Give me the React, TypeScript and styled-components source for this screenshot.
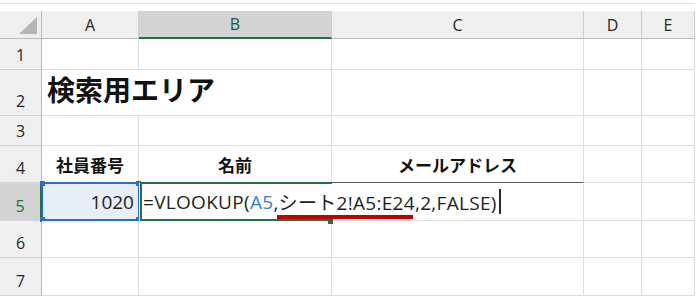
import React from "react";
import styled, { createGlobalStyle } from "styled-components";

const GRID = "#dcdcdc";
const HEAD_BG = "#efefef";
const HEAD_SEL = "#d3d3d3";
const GREEN = "#217346";
const BLUE = "#2a6fcb";
const FONT = `"Open Sans", "Noto Sans CJK JP", sans-serif`;

const Global = createGlobalStyle`
  *, *::before, *::after { box-sizing: border-box; }
  html, body { margin: 0; padding: 0; background: #fff; }
  body { font-family: ${FONT}; color: #1b1b1b; }
`;

const Sheet = styled.div`
  display: grid;
  width: 695px;
  grid-template-columns: 42px 97px 193px 252px 58px 53px;
  grid-template-rows: 11px 28px 31px 46px 30px 37px 38px 37px 38px;
  background: #fff;
`;

const TopStrip = styled.div`
  grid-column: 1 / -1;
  padding-top: 3px;
  &::after {
    content: "";
    display: block;
    height: 1px;
    background: #e2e2e2;
  }
`;

const Corner = styled.div`
  display: flex;
  align-items: flex-end;
  justify-content: flex-end;
  padding: 0 4px 4px 0;
  background: ${HEAD_BG};
  border-right: 1px solid #b9b9b9;
  border-bottom: 1px solid #b9b9b9;
`;

const ColHeader = styled.div<{ $selected?: boolean }>`
  display: flex;
  align-items: center;
  justify-content: center;
  font-size: 16px;
  color: ${(p) => (p.$selected ? "#1f5a38" : "#262626")};
  background: ${(p) => (p.$selected ? HEAD_SEL : HEAD_BG)};
  border-right: 1px solid #cdcdcd;
  border-bottom: ${(p) => (p.$selected ? `2px solid ${GREEN}` : "1px solid #b9b9b9")};
`;

const RowHeader = styled.div<{ $selected?: boolean }>`
  display: flex;
  align-items: flex-end;
  justify-content: center;
  padding-bottom: 4px;
  font-size: 16px;
  line-height: 20px;
  color: ${(p) => (p.$selected ? GREEN : "#262626")};
  background: ${(p) => (p.$selected ? HEAD_SEL : HEAD_BG)};
  border-right: ${(p) => (p.$selected ? `2px solid ${GREEN}` : "1px solid #b9b9b9")};
  border-bottom: 1px solid #d4d4d4;
`;

const Cell = styled.div<{
  $noRight?: boolean;
  $darkBottom?: boolean;
  $justify?: string;
  $bg?: string;
}>`
  position: relative;
  display: flex;
  align-items: center;
  justify-content: ${(p) => p.$justify || "flex-start"};
  min-width: 0;
  background: ${(p) => p.$bg || "#fff"};
  border-right: 1px solid ${(p) => (p.$noRight ? "transparent" : GRID)};
  border-bottom: 1px solid ${(p) => (p.$darkBottom ? "#5a5a5a" : GRID)};
`;

const TitleCell = styled(Cell)`
  align-items: flex-end;
  padding: 0 0 9px 5px;
  z-index: 1;
`;

const Title = styled.span`
  white-space: nowrap;
  font-size: 28px;
  font-weight: 700;
  line-height: 32px;
  color: #111;
`;

const Label = styled.span`
  font-size: 17px;
  font-weight: 700;
  color: #111;
  white-space: nowrap;
`;

const NumberCell = styled(Cell)`
  padding-right: 4px;
  font-size: 19px;
  color: #222;
`;

const RefFrame = styled.div`
  position: absolute;
  top: -1px;
  bottom: -1px;
  left: 0;
  right: -1px;
  border-top: 2px solid ${BLUE};
  border-bottom: 2px solid ${BLUE};
  border-left: 1px solid ${BLUE};
  border-right: 1px solid ${BLUE};
  pointer-events: none;
`;

const Handle = styled.div<{ $x: "left" | "right"; $y: "top" | "bottom" }>`
  position: absolute;
  width: 5px;
  height: 5px;
  background: ${BLUE};
  ${(p) => (p.$x === "left" ? "left: -2px;" : "right: -3px;")}
  ${(p) => (p.$y === "top" ? "top: -2px;" : "bottom: -2px;")}
`;

const ActiveCell = styled(Cell)`
  z-index: 2;
  padding-left: 4px;
`;

const ActiveFrame = styled.div`
  position: absolute;
  top: -1px;
  bottom: -1px;
  left: 1px;
  right: -1px;
  border-top: 2px solid ${GREEN};
  border-bottom: 2px solid ${GREEN};
  border-left: 2px solid ${GREEN};
  pointer-events: none;
`;

const FillHandle = styled.div`
  position: absolute;
  right: -2px;
  bottom: -4px;
  width: 5px;
  height: 5px;
  background: ${GREEN};
`;

const Formula = styled.span`
  position: relative;
  display: inline-flex;
  align-items: center;
  white-space: nowrap;
  font-size: 19px;
  letter-spacing: 0.3px;
  color: #1e1e1e;
`;

const Ref = styled.span`
  color: #2f7fd6;
`;

const Caret = styled.span`
  display: inline-block;
  width: 2px;
  height: 25px;
  margin-left: 2px;
  background: #2a2a2a;
`;

const Annotation = styled.div`
  position: absolute;
  left: 138px;
  top: 32px;
  width: 136px;
  height: 4px;
  background: #c00000;
`;

const COLS = ["A", "B", "C", "D", "E"];

export default function App() {
  const blank = (key: string) => <Cell key={key} />;

  const rows: React.ReactNode[] = [];
  for (let r = 1; r <= 7; r++) {
    rows.push(
      <RowHeader key={`h${r}`} $selected={r === 5}>
        {r}
      </RowHeader>
    );
    if (r === 2) {
      rows.push(
        <TitleCell key="A2" $noRight>
          <Title>検索用エリア</Title>
        </TitleCell>
      );
      ["B", "C", "D", "E"].forEach((c) => rows.push(blank(`${c}2`)));
    } else if (r === 4) {
      rows.push(
        <Cell key="A4" $justify="center" $darkBottom>
          <Label>社員番号</Label>
        </Cell>,
        <Cell key="B4" $justify="center" $darkBottom>
          <Label>名前</Label>
        </Cell>,
        <Cell key="C4" $justify="center" $darkBottom>
          <Label>メールアドレス</Label>
        </Cell>,
        blank("D4"),
        blank("E4")
      );
    } else if (r === 5) {
      rows.push(
        <NumberCell key="A5" $justify="flex-end" $bg="#e6eef8">
          1020
          <RefFrame />
          <Handle $x="left" $y="top" />
          <Handle $x="right" $y="top" />
          <Handle $x="left" $y="bottom" />
          <Handle $x="right" $y="bottom" />
        </NumberCell>,
        <ActiveCell key="B5" $noRight>
          <ActiveFrame />
          <FillHandle />
          <Formula>
            =VLOOKUP(<Ref>A5</Ref>,シート2!A5:E24,2,FALSE)
            <Caret />
          </Formula>
          <Annotation />
        </ActiveCell>,
        blank("C5"),
        blank("D5"),
        blank("E5")
      );
    } else {
      COLS.forEach((c) => rows.push(blank(`${c}${r}`)));
    }
  }

  return (
    <>
      <Global />
      <Sheet>
        <TopStrip />
        <Corner>
          <svg width="18" height="17" viewBox="0 0 18 17">
            <polygon points="18,0 18,17 0,17" fill="#b5b5b5" />
          </svg>
        </Corner>
        {COLS.map((c) => (
          <ColHeader key={c} $selected={c === "B"}>
            {c}
          </ColHeader>
        ))}
        {rows}
      </Sheet>
    </>
  );
}
